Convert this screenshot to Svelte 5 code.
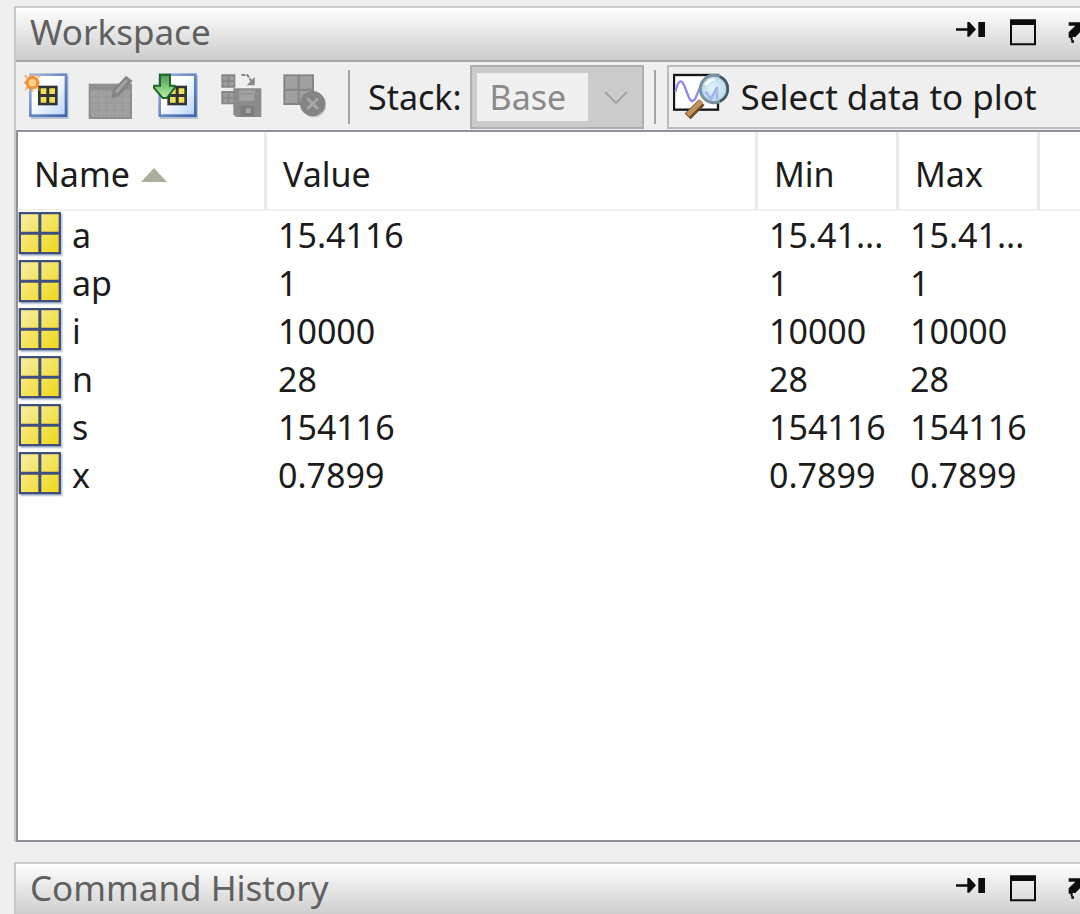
<script lang="ts">
  type Variable = { name: string; value: string; min: string; max: string };

  let variables: Variable[] = [
    { name: 'a', value: '15.4116', min: '15.41...', max: '15.41...' },
    { name: 'ap', value: '1', min: '1', max: '1' },
    { name: 'i', value: '10000', min: '10000', max: '10000' },
    { name: 'n', value: '28', min: '28', max: '28' },
    { name: 's', value: '154116', min: '154116', max: '154116' },
    { name: 'x', value: '0.7899', min: '0.7899', max: '0.7899' }
  ];
</script>

{#snippet titleBar(title: string)}
  <header class="title-bar">
    <h2>{title}</h2>
    <div class="window-buttons">
      <button aria-label="Minimize {title}">
        <svg viewBox="0 0 90 90">
          <path d="M0 28h38v7H0z M34 9h6l20 22-20 22h-6z M67 9h20v45H67z" />
        </svg>
      </button>
      <button aria-label="Maximize {title}">
        <svg viewBox="0 0 90 90">
          <path fill-rule="evenodd" d="M6 1h78v78H6z M12 18v55h66V18z" />
        </svg>
      </button>
      <button aria-label="Undock {title}">
        <svg viewBox="0 0 90 90">
          <path d="M26 10h50v48H62V38L46 54h-8v10h-6v-8h-6V40l20-20H26z M34 64h8v7h-8z" />
        </svg>
      </button>
    </div>
  </header>
{/snippet}

{#snippet page(x: number)}
  <rect x={x + 4} y="8" width="114" height="130" fill="#b9c3d3" />
  <rect x={x + 3} y="5" width="107" height="123" fill="url(#page-fill)" stroke="url(#page-edge)" stroke-width="8" />
  <rect x={x + 26} y="38" width="59" height="59" fill="#343434" />
  <path
    fill="#eee05c"
    d="M{x + 34} 46h17v17h-17z M{x + 60} 46h17v17h-17z M{x + 34} 72h17v17h-17z M{x + 60} 72h17v17h-17z"
  />
{/snippet}

<svg class="defs" aria-hidden="true">
  <defs>
    <linearGradient id="page-fill" x1="0" y1="0" x2="1" y2="1">
      <stop offset="0.4" stop-color="#ffffff" />
      <stop offset="1" stop-color="#b7d2fa" />
    </linearGradient>
    <linearGradient id="page-edge" x1="0" y1="0" x2="1" y2="1">
      <stop offset="0" stop-color="#a3bde6" />
      <stop offset="0.6" stop-color="#5b80bd" />
      <stop offset="1" stop-color="#3c64a8" />
    </linearGradient>
    <linearGradient id="cell-fill" x1="0" y1="0" x2="1" y2="1">
      <stop offset="0" stop-color="#f8efa4" />
      <stop offset="0.5" stop-color="#f3e35c" />
      <stop offset="1" stop-color="#efd81c" />
    </linearGradient>
    <linearGradient id="arrow-fill" x1="0" y1="0" x2="0" y2="1">
      <stop offset="0" stop-color="#4c9a50" />
      <stop offset="1" stop-color="#b6f0a6" />
    </linearGradient>
    <radialGradient id="lens-fill">
      <stop offset="0" stop-color="#e8f6ff" />
      <stop offset="1" stop-color="#b4d5ea" />
    </radialGradient>
  </defs>
</svg>

<main class="desktop">
  <section class="pane workspace">
    {@render titleBar('Workspace')}

    <div class="toolbar">
      <div class="tools">
        <button aria-label="New variable">
          <svg viewBox="0 0 144 144">
            {@render page(22)}
            <g stroke="#f6a65c" stroke-width="7" stroke-dasharray="7 3">
              <path d="M31 2v54 M6 29h50 M9 7l44 44 M53 7L9 51" />
            </g>
            <circle cx="31" cy="29" r="16" fill="#ffd08c" stroke="#f39035" stroke-width="9" />
          </svg>
        </button>
        <button aria-label="Open selection" disabled>
          <svg viewBox="0 0 144 144">
            <rect x="8" y="32" width="130" height="106" fill="#8f8f8f" />
            <rect x="14" y="52" width="118" height="80" fill="#a0a0a0" />
            <path d="M38 52v80 M62 52v80 M86 52v80 M110 52v80 M14 72h118 M14 92h118 M14 112h118" stroke="#979797" stroke-width="3" />
            <path d="M76 76l4-24 40-44 20 16-42 46z" fill="#858585" />
            <path d="M90 58l32-36" stroke="#a3a3a3" stroke-width="9" />
          </svg>
        </button>
        <button aria-label="Import data">
          <svg viewBox="0 0 144 144">
            {@render page(26)}
            <path d="M30 5h30v33h14v7L50 75H38L12 45v-7h18z" fill="url(#arrow-fill)" stroke="#1f6726" stroke-width="6" />
          </svg>
        </button>
        <button aria-label="Save workspace" disabled>
          <svg viewBox="0 0 144 144">
            <path d="M22 4h42v40H22z M22 54h42v40H22z" fill="#868686" />
            <path d="M28 10h13v12H28z M46 10h13v12H46z M28 27h13v12H28z M46 27h13v12H46z M28 60h13v12H28z M46 60h13v12H46z M28 77h13v12H28z M46 77h13v12H46z" fill="#9d9d9d" />
            <path d="M82 6h18l12 18" fill="none" stroke="#868686" stroke-width="6" stroke-dasharray="12 3" />
            <path d="M122 12v25H98z" fill="#868686" />
            <path d="M58 46h84v86H66l-8-8z" fill="#8b8b8b" />
            <rect x="76" y="52" width="46" height="32" fill="#a2a2a2" />
            <rect x="80" y="60" width="38" height="4" fill="#8f8f8f" />
            <rect x="80" y="98" width="40" height="32" fill="#7d7d7d" />
            <rect x="96" y="106" width="14" height="14" fill="#a6a6a6" />
          </svg>
        </button>
        <button aria-label="Delete variable" disabled>
          <svg viewBox="0 0 144 144">
            <rect x="16" y="4" width="92" height="92" fill="#858585" />
            <path d="M22 10h37v37H22z M65 10h37v37H65z M22 53h37v37H22z M65 53h37v37H65z" fill="#a0a0a0" />
            <circle cx="108" cy="96" r="37" fill="#c9c9c9" />
            <circle cx="104" cy="92" r="38" fill="#858585" />
            <path d="M88 76l32 32 M120 76l-32 32" stroke="#a9a9a9" stroke-width="8" />
          </svg>
        </button>
      </div>

      <span class="divider"></span>

      <label for="stack">Stack:</label>
      <div class="stack-box">
        <select id="stack" disabled>
          <option>Base</option>
        </select>
        <svg class="chevron" viewBox="0 0 24 16">
          <path d="M1 2l11 11L23 2" fill="none" stroke="#a3a3a3" stroke-width="2" />
        </svg>
      </div>

      <span class="divider"></span>

      <button class="plot-button">
        <svg viewBox="0 0 174 144">
          <rect x="3" y="6" width="132" height="104" fill="#fff" stroke="#151515" stroke-width="7" />
          <path d="M7 56L14 34q10-20 20 4l14 36q10 20 20 0l16-38" fill="none" stroke="#8f89f0" stroke-width="7" />
          <path d="M44 130l42-42" stroke="#6e4b20" stroke-width="25" />
          <path d="M44 126l42-42" stroke="#c0935a" stroke-width="15" />
          <circle cx="123" cy="48" r="41" fill="url(#lens-fill)" stroke="#7a929e" stroke-width="9" />
          <path d="M141 11a41 41 0 0 1 0 74" fill="none" stroke="#46555c" stroke-width="7" />
          <path d="M98 56l16 22 18-36v36" fill="none" stroke="#a3b6ee" stroke-width="8" />
          <path d="M98 36q10-16 26-16" fill="none" stroke="#fff" stroke-width="8" />
        </svg>
        <span>Select data to plot</span>
      </button>
    </div>

    <div class="grid">
      <table>
        <colgroup>
          <col class="name-col" />
          <col class="value-col" />
          <col class="stat-col" />
          <col class="stat-col" />
          <col />
        </colgroup>
        <thead>
          <tr>
            <th scope="col" aria-sort="ascending">
              Name
              <svg class="sort" viewBox="0 0 26 14"><path d="M13 0l13 14H0z" fill="#acad9b" /></svg>
            </th>
            <th scope="col">Value</th>
            <th scope="col">Min</th>
            <th scope="col">Max</th>
            <td></td>
          </tr>
        </thead>
        <tbody>
          {#each variables as variable (variable.name)}
            <tr>
              <td class="name-cell">
                <div class="name">
                  <svg viewBox="0 0 144 144">
                    <rect x="8" y="8" width="126" height="128" fill="#c5cfe2" />
                    <rect x="2" y="3" width="127" height="127" fill="#3f4f7c" />
                    <path d="M9 10h52v52H9z M70 10h52v52H70z M9 71h52v52H9z M70 71h52v52H70z" fill="url(#cell-fill)" />
                  </svg>
                  <span>{variable.name}</span>
                </div>
              </td>
              <td>{variable.value}</td>
              <td>{variable.min}</td>
              <td>{variable.max}</td>
              <td></td>
            </tr>
          {/each}
        </tbody>
      </table>
    </div>
  </section>

  <section class="pane history">
    {@render titleBar('Command History')}
  </section>
</main>

<style>
  :global(body) {
    background: #efefef;
    overflow: hidden;
  }

  .desktop {
    display: flex;
    flex-direction: column;
    gap: 20px;
    height: 100vh;
    padding: 6px 0 0 14px;
    box-sizing: border-box;
    overflow: hidden;
    color: #1c1c1c;
    font-family: 'Noto Sans', 'Open Sans', sans-serif;
    font-size: 34px;
    line-height: 48px;
  }

  .defs {
    position: absolute;
    width: 0;
    height: 0;
  }

  svg {
    display: block;
    flex: none;
  }

  button {
    padding: 0;
    border: none;
    background: none;
    color: inherit;
    font: inherit;
  }

  /* panes run on past the right edge of the window */
  .pane {
    margin-right: -16px;
    border-left: 2px solid #c9c9c9;
    border-top: 2px solid #cbcbcb;
  }

  .workspace {
    flex: 1;
    display: flex;
    flex-direction: column;
    min-height: 0;
  }

  .history {
    flex: none;
    height: 50px;
  }

  .title-bar {
    display: flex;
    align-items: center;
    justify-content: space-between;
    height: 52px;
    padding: 0 6px 0 14px;
    background: linear-gradient(#ffffff, #cccccc);
    border-bottom: 2px solid #a6a6a6;
  }

  h2 {
    margin: 0;
    padding-bottom: 4px;
    color: #606060;
    font-size: 35px;
    font-weight: 400;
    line-height: 48px;
  }

  .window-buttons {
    display: flex;
    gap: 22px;
  }

  .window-buttons svg {
    width: 30px;
    height: 30px;
    fill: #0c0c0c;
  }

  .toolbar {
    display: flex;
    align-items: center;
    height: 68px;
    padding: 2px 0 0 6px;
    box-sizing: border-box;
    white-space: nowrap;
  }

  .tools {
    display: flex;
    gap: 16px;
  }

  .tools svg {
    width: 48px;
    height: 48px;
  }

  .divider {
    flex: none;
    width: 2px;
    height: 54px;
    background: #a3a3a3;
  }

  .tools + .divider {
    margin: 0 18px 0 22px;
  }

  .stack-box {
    position: relative;
    flex: none;
    margin: 0 10px 0 8px;
  }

  select {
    display: block;
    width: 174px;
    height: 64px;
    padding: 0 0 0 18px;
    appearance: none;
    border: 2px solid #adafb1;
    border-radius: 0;
    background: linear-gradient(#f0f0f0, #f0f0f0) 5px 6px / 111px 48px no-repeat #cbcbcb;
    color: #8a8a8a;
    font: inherit;
    opacity: 1;
  }

  .chevron {
    position: absolute;
    top: 25px;
    right: 16px;
    width: 24px;
    height: 16px;
    pointer-events: none;
  }

  .plot-button {
    display: flex;
    align-items: center;
    flex: 1;
    gap: 10px;
    height: 64px;
    margin-left: 11px;
    padding-left: 4px;
    box-sizing: border-box;
    border: 2px solid #bdbdbd;
    font-size: 35px;
  }

  .plot-button svg {
    width: 58px;
    height: 48px;
  }

  .grid {
    flex: 1;
    min-height: 0;
    background: #fff;
    border: 2px solid #8e9197;
    border-right: none;
  }

  table {
    width: 100%;
    table-layout: fixed;
    border-collapse: separate;
    border-spacing: 0;
  }

  .name-col {
    width: 249px;
  }

  .value-col {
    width: 491px;
  }

  .stat-col {
    width: 141px;
  }

  th,
  thead td {
    height: 70px;
    padding: 7px 0 0 16px;
    box-sizing: content-box;
    border-bottom: 2px solid #f1f1f1;
    font-weight: 400;
    text-align: left;
    white-space: nowrap;
  }

  th {
    border-right: 3px solid #ebebeb;
  }

  .sort {
    display: inline-block;
    width: 26px;
    height: 14px;
    margin-left: 2px;
    vertical-align: 5px;
  }

  tbody td {
    height: 48px;
    padding: 0 0 0 11px;
    white-space: nowrap;
  }

  tbody .name-cell {
    padding-left: 0;
  }

  .name {
    display: flex;
    align-items: center;
    gap: 6px;
  }

  .name svg {
    width: 48px;
    height: 48px;
  }
</style>
